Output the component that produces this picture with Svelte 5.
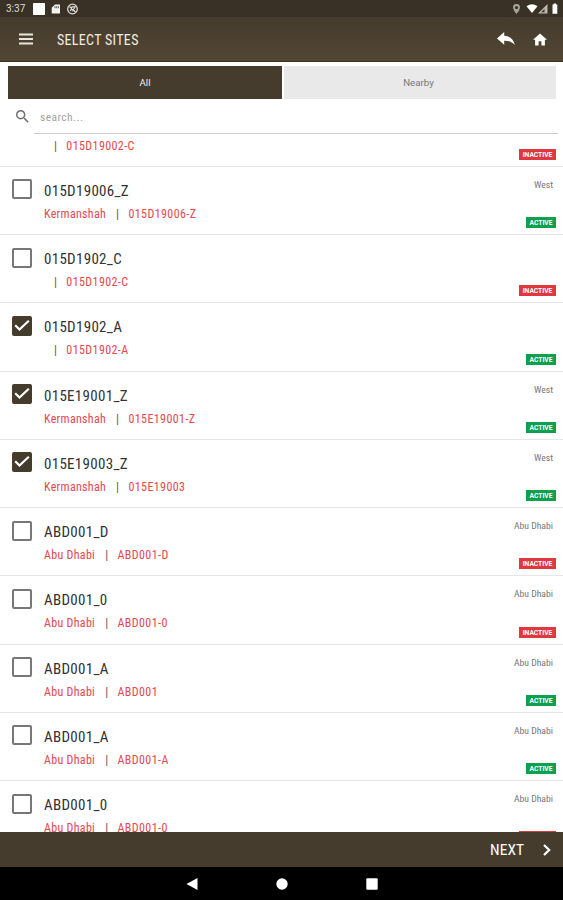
<script>
  let sites = $state([
    { name: "015D19002_C", city: "", code: "015D19002-C", region: "", active: false, checked: false },
    { name: "015D19006_Z", city: "Kermanshah", code: "015D19006-Z", region: "West", active: true, checked: false },
    { name: "015D1902_C", city: "", code: "015D1902-C", region: "", active: false, checked: false },
    { name: "015D1902_A", city: "", code: "015D1902-A", region: "", active: true, checked: true },
    { name: "015E19001_Z", city: "Kermanshah", code: "015E19001-Z", region: "West", active: true, checked: true },
    { name: "015E19003_Z", city: "Kermanshah", code: "015E19003", region: "West", active: true, checked: true },
    { name: "ABD001_D", city: "Abu Dhabi", code: "ABD001-D", region: "Abu Dhabi", active: false, checked: false },
    { name: "ABD001_0", city: "Abu Dhabi", code: "ABD001-0", region: "Abu Dhabi", active: false, checked: false },
    { name: "ABD001_A", city: "Abu Dhabi", code: "ABD001", region: "Abu Dhabi", active: true, checked: false },
    { name: "ABD001_A", city: "Abu Dhabi", code: "ABD001-A", region: "Abu Dhabi", active: true, checked: false },
    { name: "ABD001_0", city: "Abu Dhabi", code: "ABD001-0", region: "Abu Dhabi", active: false, checked: false },
  ]);

  let tab = $state("All");
</script>

<div class="screen">
  <div class="status">
    <span class="clock">3:37</span>
    <svg class="status-left" viewBox="0 0 48 12">
      <rect x="0" y="0" width="12" height="12" rx="0.5" fill="#fff"/>
      <path d="M22 1.5h5v9h-8.3V4.7z" fill="#f4f2ee"/>
      <path d="M22 3.2v2M23.7 3.2v2M25.4 3.2v2" stroke="#3a3128" stroke-width="0.8"/>
      <circle cx="39.500" cy="6" r="4.800" fill="none" stroke="#dedbd5" stroke-width="1.300"/>
      <path d="M36.500 3.500l6 5.500M37.500 8l1.600-4.200h3L39.500 8.300" fill="none" stroke="#dedbd5" stroke-width="1.200"/>
    </svg>
    <svg class="status-right" viewBox="0 0 46 12">
      <path d="M3.500 1a3.400 3.400 0 0 0-3.400 3.500C.1 7 3.500 11 3.500 11s3.400-4 3.400-6.500A3.400 3.400 0 0 0 3.500 1z" fill="#aaa59b"/>
      <circle cx="3.500" cy="4.600" r="1.600" fill="#3a3128"/>
      <path d="M13.500 3.200Q19-.8 24.500 3.200L19 10z" fill="#fff"/>
      <path d="M34.500 1v9.500H25z" fill="#bcb7ad"/>
      <path d="M31.500 6v3.300h-3.300z" fill="#3a3128"/>
      <path d="M39.500 1.500h1.200v-1h2.400v1h1.200v9.300h-4.800z" fill="#fff"/>
    </svg>
  </div>

  <header>
    <svg class="menu" viewBox="0 0 14 12">
      <path d="M0 1.500h14M0 6h14M0 10.500h14" stroke="#e8e5df" stroke-width="2"/>
    </svg>
    <h1>SELECT SITES</h1>
    <svg class="reply" viewBox="0 0 18 14">
      <path d="M7.200 0v3.800C13 4.200 16.800 7.500 17.800 13.200 15.300 10 12 8.700 7.200 8.800v4L0 6.500z" fill="#fff"/>
    </svg>
    <svg class="home" viewBox="2 3 20 17">
      <path d="M10 20v-6h4v6h5v-8h3L12 3 2 12h3v8z" fill="#fff"/>
    </svg>
  </header>

  <div class="tabs">
    {#each ["All", "Nearby"] as label}
      <button class:selected={tab === label} onclick={() => tab = label}><span>{label}</span></button>
    {/each}
  </div>

  <div class="search">
    <svg viewBox="3 3 18 18">
      <path d="M15.5 14h-.79l-.28-.27A6.470 6.470 0 0 0 16 9.500 6.500 6.500 0 1 0 9.500 16c1.610 0 3.090-.59 4.230-1.570l.27.28v.79l5 4.990L20.490 19l-4.990-5zm-6 0C7.010 14 5 11.990 5 9.500S7.010 5 9.500 5 14 7.010 14 9.500 11.990 14 9.500 14z" fill="#6f6f6f"/>
    </svg>
    <input placeholder="search..."/>
  </div>

  <main>
    <ul>
      {#each sites as site}
        <li>
          <button class="check" class:on={site.checked} aria-label={site.name} onclick={() => site.checked = !site.checked}>
            {#if site.checked}
              <svg viewBox="0 0 20 20">
                <path d="M3.200 9.200l4.300 4.300L16.800 4.800" fill="none" stroke="#fff" stroke-width="2.200"/>
              </svg>
            {/if}
          </button>
          <div class="info">
            <div class="name">{site.name}</div>
            <div class="detail">
              <span>{site.city}</span><i>|</i><span>{site.code}</span>
            </div>
          </div>
          <div class="side">
            <span class="region">{site.region}</span>
            <span class="badge" class:active={site.active}>{site.active ? "ACTIVE" : "INACTIVE"}</span>
          </div>
        </li>
      {/each}
    </ul>
  </main>

  <footer>
    <span>NEXT</span>
    <svg viewBox="0 0 8 12">
      <path d="M1 1l5.200 5L1 11" fill="none" stroke="#fff" stroke-width="2.200"/>
    </svg>
  </footer>

  <nav>
    <svg viewBox="0 0 12 12"><path d="M11.500 0v12L.5 6z" fill="#fff"/></svg>
    <svg viewBox="0 0 12 12"><circle cx="6" cy="6" r="5.700" fill="#fff"/></svg>
    <svg viewBox="0 0 12 12"><rect x="0.300" y="0.300" width="11.400" height="11.400" rx="1" fill="#fff"/></svg>
  </nav>
</div>

<style>
  :global(body) {
    margin: 0;
    background: #fff;
  }

  .screen {
    display: flex;
    flex-direction: column;
    width: 563px;
    height: 900px;
    overflow: hidden;
    background: #fff;
    font-family: Roboto, "Liberation Sans", sans-serif;
  }

  svg {
    display: block;
    flex-shrink: 0;
  }

  button {
    padding: 0;
    border: none;
    font-family: inherit;
  }

  .status {
    display: flex;
    align-items: center;
    box-sizing: border-box;
    height: 17px;
    padding: 1px 4px 0 6px;
    background: #393126;
    color: #dedbd5;
  }

  .clock {
    width: 27px;
    font-size: 10px;
    line-height: 16px;
  }

  .status-left {
    width: 48px;
    height: 12px;
  }

  .status-right {
    width: 46px;
    height: 12px;
    margin-left: auto;
  }

  header {
    display: flex;
    align-items: center;
    box-sizing: border-box;
    height: 45px;
    padding: 0 16px 0 19px;
    background: linear-gradient(#453b2e, #524732);
    border-bottom: 1px solid #443019;
  }

  .menu {
    width: 14px;
    height: 12px;
  }

  h1 {
    flex: 1;
    margin: 2px 0 0 24px;
    font-size: 14px;
    font-weight: 400;
    font-stretch: 75%;
    letter-spacing: 0.320px;
    color: #f0ede7;
  }

  .reply {
    width: 18px;
    height: 14px;
    margin-right: 18px;
  }

  .home {
    width: 14px;
    height: 13px;
  }

  .tabs {
    display: grid;
    grid-template-columns: 274px 272px;
    gap: 2px;
    height: 33px;
    margin: 4px 7px 0 8px;
  }

  .tabs button {
    background: #e9e9e9;
    font-size: 9.700px;
    color: #777;
  }

  .tabs button:last-child {
    padding-right: 3px;
  }

  .tabs button.selected {
    background: #463c2e;
    color: #eee;
  }

  .search {
    display: flex;
    align-items: center;
    height: 35px;
    padding: 0 5px 0 16px;
  }

  .search svg {
    width: 13px;
    height: 13px;
    margin-right: 5px;
  }

  .search input {
    flex: 1;
    box-sizing: border-box;
    height: 35px;
    padding: 1px 6px 0;
    border: none;
    border-bottom: 1px solid #ccc;
    outline: none;
    background: none;
    font-family: inherit;
    font-size: 11.500px;
    font-stretch: 75%;
    letter-spacing: 0.450px;

    &::placeholder { color: #a2a2a2; }
  }

  main {
    flex: 1;
    min-height: 0;
    overflow: hidden;
  }

  /* list is scrolled past half of the first row */
  ul {
    margin: -35.500px 0 0;
    padding: 0;
    list-style: none;
  }

  li {
    display: flex;
    box-sizing: border-box;
    height: 68.250px;
    padding: 0 7px 0 12px;
    border-bottom: 1px solid #e6e6e6;
  }

  li:first-child .name,
  li:first-child .check {
    visibility: hidden;
  }

  .check {
    box-sizing: border-box;
    width: 20px;
    height: 20px;
    margin-top: 12.500px;
    border: 2px solid #777;
    border-radius: 2px;
    background: #fff;

    &.on {
      border: none;
      background: #463c2e;
    }
  }

  .info {
    flex: 1;
    margin-left: 12px;
    font-stretch: 75%;
  }

  .name {
    margin-top: 14px;
    font-size: 15px;
    line-height: 20px;
    letter-spacing: 0.300px;
    color: #333;
  }

  .detail {
    margin-top: 5px;
    font-size: 12px;
    line-height: 16px;
    letter-spacing: 0.400px;
    color: #e5484f;
    white-space: nowrap;
  }

  .detail span:first-child {
    letter-spacing: 0.300px;
  }

  .detail i {
    margin: 0 9px 0 10px;
    font-style: normal;
    color: #555;
  }

  .side {
    display: flex;
    flex-direction: column;
    align-items: flex-end;
    justify-content: space-between;
    padding: 12px 0 6px;
  }

  .region {
    margin-right: 3px;
    font-size: 9.700px;
    line-height: 12px;
    font-stretch: 75%;
    color: #777;
  }

  .badge {
    box-sizing: border-box;
    width: 37px;
    height: 11px;
    background: #e0383f;
    font-size: 6.700px;
    font-weight: 700;
    line-height: 12px;
    text-align: center;
    color: #fff;

    &.active {
      width: 30px;
      background: #0ea04f;
    }
  }

  footer {
    display: flex;
    align-items: center;
    justify-content: flex-end;
    height: 35px;
    padding-right: 12px;
    background: #463c2e;
    color: #fff;
  }

  footer span {
    margin-right: 19px;
    font-size: 15.500px;
    font-stretch: 75%;
  }

  footer svg {
    width: 8px;
    height: 12px;
  }

  nav {
    display: flex;
    align-items: center;
    justify-content: center;
    gap: 78px;
    height: 33px;
    background: #000;
  }

  nav svg {
    width: 12px;
    height: 12px;
  }
</style>
